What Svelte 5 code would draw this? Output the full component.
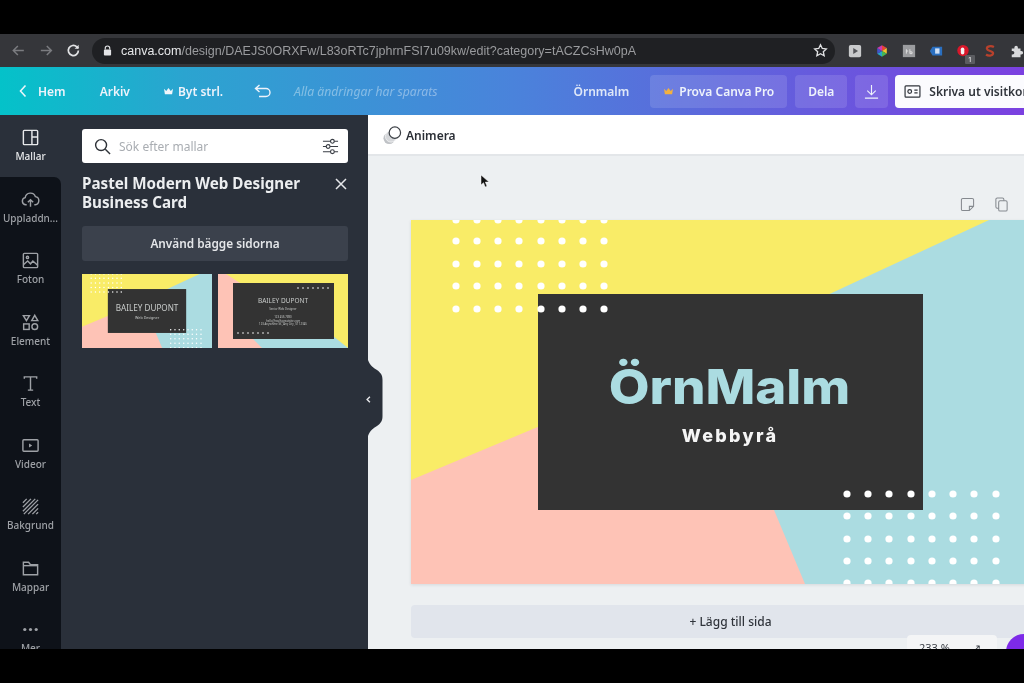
<script>
  const tabs = [
    { id: "mallar", label: "Mallar" },
    { id: "upload", label: "Uppladdn..." },
    { id: "foton", label: "Foton" },
    { id: "element", label: "Element" },
    { id: "text", label: "Text" },
    { id: "videor", label: "Videor" },
    { id: "bakgrund", label: "Bakgrund" },
    { id: "mappar", label: "Mappar" },
    { id: "mer", label: "Mer" }
  ];

  const dotXa = [45, 66, 87, 108, 130, 151, 172, 193];
  const dotYa = [0, 21, 44, 66, 89];
  const dotXb = [436, 457, 478, 500, 521, 542, 563, 585];
  const dotYb = [274, 296, 319, 341, 363];

  const extensions = ["play", "wheel", "fb", "blue", "red", "s", "puzzle"];
</script>

{#snippet art()}
  <rect width="639" height="364" fill="#f9ec67" />
  <polygon points="0,260 430,80 400,364 0,364" fill="#fec3b6" />
  <polygon points="578,0 639,0 639,364 394,364 363,290 300,129" fill="#abdce1" />
  <rect x="127" y="74" width="385" height="216" fill="#333333" />
  {#each dotYa as y}
    {#each dotXa as x}<circle cx={x} cy={y} r="3.6" fill="#fff" />{/each}
  {/each}
  {#each dotYb as y}
    {#each dotXb as x}<circle cx={x} cy={y} r="3.6" fill="#fff" />{/each}
  {/each}
{/snippet}

{#snippet tabIcon(id)}
  <svg class="tab-icon" viewBox="0 0 20 20" fill="none" stroke="currentColor" stroke-width="1.5">
    {#if id === "mallar"}
      <rect x="2.5" y="2.5" width="15" height="15" rx="1" /><path d="M11.5 2.5v15M11.5 9.5h6" />
    {:else if id === "upload"}
      <path d="M6 15.5H5a3.8 3.8 0 0 1-.6-7.5A5.6 5.6 0 0 1 15.2 7a4.3 4.3 0 0 1-.2 8.5h-1" /><path d="M10 17.5v-7M7.2 13 10 10.2l2.8 2.8" />
    {:else if id === "foton"}
      <rect x="2.5" y="2.5" width="15" height="15" rx="1" /><circle cx="6.8" cy="6.8" r="1.2" /><path d="M2.5 14.5 7 10.5l3 3 2.5-3 5 4.5" />
    {:else if id === "element"}
      <path d="M2.5 2.8h6.4L5.7 8zM14.5 2.4l3.2 5.6h-6.4z" /><rect x="2.8" y="11.5" width="5.8" height="5.8" /><circle cx="14.5" cy="14.4" r="3" />
    {:else if id === "text"}
      <path d="M3.5 5V3h13v2M10 3v14M7.2 17h5.6" />
    {:else if id === "videor"}
      <rect x="2" y="4" width="16" height="12" rx="1" /><path d="M8.5 8v4l3.3-2z" fill="currentColor" stroke="none" />
    {:else if id === "bakgrund"}
      <path d="M2 6 6 2M2 10.5 10.5 2M2 15 15 2M3 18 18 3M7.5 18 18 7.5M12 18l6-6M16 18l2-2" stroke-width="1.4" />
    {:else if id === "mappar"}
      <path d="M2.5 16.5v-13h5.5l2 2.5H17.5v10.5z" /><path d="M2.5 7h15" />
    {:else}
      <circle cx="4" cy="10" r="1.7" fill="currentColor" stroke="none" /><circle cx="10" cy="10" r="1.7" fill="currentColor" stroke="none" /><circle cx="16" cy="10" r="1.7" fill="currentColor" stroke="none" />
    {/if}
  </svg>
{/snippet}

{#snippet extIcon(id)}
  <svg class="ext" viewBox="0 0 16 16">
    {#if id === "play"}
      <rect x="1" y="1" width="14" height="14" rx="2" fill="#c9cacc" /><path d="M6 4.5v7l5.500-3.500z" fill="#55565a" />
    {:else if id === "wheel"}
      <path d="M8 1.500 13.500 4.500 8 8z" fill="#e8443a" /><path d="M13.500 4.500v6.500L8 8z" fill="#f0c330" /><path d="M13.500 11 8 14.500V8z" fill="#45b754" /><path d="M8 14.500 2.500 11 8 8z" fill="#27a5c9" /><path d="M2.500 11V4.500L8 8z" fill="#4353c8" /><path d="M2.500 4.500 8 1.500V8z" fill="#c93bb0" />
    {:else if id === "fb"}
      <rect x="1" y="1" width="14" height="14" fill="#9b9c9f" /><path d="M5 11V6M5 8h2M9 6v5M9 9h2.500v2H9" stroke="#e6e6e6" fill="none" />
    {:else if id === "blue"}
      <path d="M1 8l3-5h11v10H4z" fill="#2a6fc0" /><rect x="7" y="5" width="5" height="6" fill="#cfe0f4" />
    {:else if id === "red"}
      <circle cx="8" cy="7.500" r="6.500" fill="#d9172a" /><rect x="5.500" y="4" width="4" height="8" rx="2" fill="#f3f3f3" />
    {:else if id === "s"}
      <path d="M12.500 3.500C9 1.500 4 2.500 4.500 5.500 5 8.500 12 7.500 11.500 10.800 11 13.800 6 14 3.500 12" stroke="#b8412c" stroke-width="2.600" fill="none" />
    {:else}
      <path d="M2 5h3V4a2 2 0 0 1 4 0v1h3v3h1a2 2 0 0 1 0 4h-1v3H2v-3h1a2 2 0 0 0 0-4H2z" fill="#d8d9db" />
    {/if}
  </svg>
{/snippet}

<div class="screen">
  <div class="browser">
    <svg class="nav dim" viewBox="0 0 16 16"><path d="M14 8H2.500M7.500 3 2.500 8l5 5" /></svg>
    <svg class="nav dim" viewBox="0 0 16 16"><path d="M2 8h11.500M8.500 3l5 5-5 5" /></svg>
    <svg class="nav reload" viewBox="0 0 16 16"><path d="M13.500 8A5.500 5.500 0 1 1 11.800 4L13.500 5.500" /><path d="M13.800 1.800v4.400H9.400z" fill="currentColor" stroke="none" /></svg>
    <div class="url">
      <svg class="lock" viewBox="0 0 10 12"><path d="M2.500 5V3.500a2.500 2.500 0 0 1 5 0V5" fill="none" stroke="currentColor" stroke-width="1.300" /><rect x="1" y="5" width="8" height="6.500" rx="1" fill="currentColor" /></svg>
      <span class="host">canva.com</span><span class="path">/design/DAEJS0ORXFw/L83oRTc7jphrnFSI7u09kw/edit?category=tACZCsHw0pA</span>
      <svg class="star" viewBox="0 0 16 16"><path d="m8 1.800 1.900 4 4.300.5-3.200 3 .9 4.300L8 11.500l-3.900 2.100.9-4.300-3.200-3 4.300-.5z" /></svg>
    </div>
    <div class="exts">
      {#each extensions as ext}
        <span class="ext-wrap">
          {@render extIcon(ext)}
          {#if ext === "red"}<span class="ext-badge">1</span>{/if}
        </span>
      {/each}
    </div>
  </div>

  <header class="topbar">
    <svg class="back" viewBox="0 0 8 14"><path d="M6.500 1.500 1.500 7l5 5.500" /></svg>
    <span class="top-link hem">Hem</span>
    <span class="top-link arkiv">Arkiv</span>
    <svg class="crown" viewBox="0 0 12 10"><path d="M1 2l2.500 2.500L6 1l2.500 3.500L11 2l-1 6H2z" fill="currentColor" /></svg>
    <span class="top-link">Byt strl.</span>
    <svg class="undo" viewBox="0 0 18 14"><path d="M5.500 1 1.500 4.500l4 3.500M1.500 4.500H12a4 4 0 0 1 0 8H5" /></svg>
    <span class="saved">Alla ändringar har sparats</span>
    <span class="top-link doc">Örnmalm</span>
    <button class="ghost pro">
      <svg class="crown gold" viewBox="0 0 12 10"><path d="M1 2l2.500 2.500L6 1l2.500 3.500L11 2l-1 6H2z" fill="currentColor" /></svg>
      Prova Canva Pro
    </button>
    <button class="ghost dela">Dela</button>
    <button class="ghost dl" aria-label="Ladda ner">
      <svg viewBox="0 0 16 16"><path d="M8 1v10M3.500 7 8 11.500 12.500 7M1 15h14" /></svg>
    </button>
    <button class="print">
      <svg viewBox="0 0 18 14"><rect x="1" y="1" width="16" height="12" rx="1" /><circle cx="6" cy="7" r="2" /><path d="M11 5.500h3.500M11 8.500h3.500" /></svg>
      Skriva ut visitkort
    </button>
  </header>

  <div class="workspace">
    <nav class="sidebar">
      {#each tabs as tab, i}
        <div class="tab" class:active={i === 0} class:first={i === 1}>
          {@render tabIcon(tab.id)}
          <span>{tab.label}</span>
        </div>
      {/each}
      <div class="tab-rest"></div>
    </nav>

    <aside class="panel">
      <div class="search">
        <svg class="search-icon" viewBox="0 0 18 18"><circle cx="7.500" cy="7.500" r="5.800" /><path d="m12 12 5 5" /></svg>
        <span class="search-text">Sök efter mallar</span>
        <svg class="filter" viewBox="0 0 18 18"><path d="M1 3.500h16M1 9h16M1 14.500h16" /><circle cx="11" cy="3.500" r="2" /><circle cx="6.500" cy="9" r="2" /><circle cx="11" cy="14.500" r="2" /></svg>
      </div>
      <div class="title-row">
        <h1>Pastel Modern Web Designer Business Card</h1>
        <svg class="close" viewBox="0 0 12 12"><path d="M1 1l10 10M11 1 1 11" /></svg>
      </div>
      <button class="use-both">Använd bägge sidorna</button>
      <div class="thumbs">
        <svg class="thumb" viewBox="0 0 639 364" preserveAspectRatio="none">
          {@render art()}
          <text x="320" y="180" text-anchor="middle" class="t-name">BAILEY DUPONT</text>
          <text x="320" y="220" text-anchor="middle" class="t-sub">Web Designer</text>
        </svg>
        <svg class="thumb" viewBox="0 0 130 74" preserveAspectRatio="none">
          <rect width="130" height="74" fill="#f9ec67" />
          <polygon points="0,0 8,0 30,14 44,74 0,74" fill="#fec3b6" />
          <polygon points="34,64 115,62 130,74 44,74" fill="#abdce1" />
          <rect x="15" y="9" width="101" height="56" fill="#333" />
          {#each [80, 85, 90, 95, 100, 105, 110] as x}<circle cx={x} cy="14" r="0.800" fill="#fff" />{/each}
          {#each [20, 25, 30, 35, 40, 45, 50] as x}<circle cx={x} cy="59" r="0.800" fill="#fff" />{/each}
          <text x="65" y="29" text-anchor="middle" class="t2-name">BAILEY DUPONT</text>
          <text x="65" y="36" text-anchor="middle" class="t2-sub">Senior Web Designer</text>
          <text x="65" y="44" text-anchor="middle" class="t2-sub">123 456 7890</text>
          <text x="65" y="47.500" text-anchor="middle" class="t2-sub">hello@reallygreatsite.com</text>
          <text x="65" y="51" text-anchor="middle" class="t2-sub">123 Anywhere St., Any City, ST 12345</text>
        </svg>
      </div>
    </aside>

    <main class="editor">
      <div class="toolbar">
        <svg class="animate" viewBox="0 0 20 20">
          <circle cx="6.500" cy="13" r="6" fill="#bfc2c6" />
          <circle cx="8.500" cy="11" r="6" fill="#d5d7da" stroke="#fff" stroke-width="0.600" />
          <circle cx="12.500" cy="7" r="6" fill="#fff" stroke="#3b3f45" stroke-width="1.300" />
        </svg>
        <span>Animera</span>
      </div>
      <div class="stage">
        <div class="page-actions">
          <svg viewBox="0 0 16 16"><path d="M10 14.500H3a1.500 1.500 0 0 1-1.500-1.500V3A1.500 1.500 0 0 1 3 1.500h10A1.500 1.500 0 0 1 14.500 3v7zM14.500 10H10v4.500" /></svg>
          <svg viewBox="0 0 16 16"><rect x="5" y="4" width="9" height="11" rx="1.500" /><path d="M5 12H3.500A1.500 1.500 0 0 1 2 10.500V2.500A1.500 1.500 0 0 1 3.500 1H9a1.500 1.500 0 0 1 1.500 1.500V4" /></svg>
        </div>
        <svg class="card" viewBox="0 0 639 364">
          {@render art()}
          <text transform="translate(318.500 184) scale(1.1 1)" text-anchor="middle" class="brand">ÖrnMalm</text>
          <text x="319" y="222" text-anchor="middle" class="tagline">Webbyrå</text>
        </svg>
        <div class="add-page">+ Lägg till sida</div>
      </div>
      <svg class="collapse" viewBox="0 0 15 76"><path d="M0 0C2 6 6 8 9 10 13 13 14.500 15 14.500 20V56C14.500 61 13 63 9 66 6 68 2 70 0 76Z" /></svg>
      <svg class="chevron" viewBox="0 0 6 10"><path d="M5 1 1 5l4 4" /></svg>
      <div class="zoom-pill"><span>233 %</span><span class="expand">↗</span></div>
      <div class="help"></div>
      <svg class="cursor" viewBox="0 0 10 14"><path d="M1 1v10l2.500-2.300L5.200 13l1.800-.8-1.700-4.100H9z" fill="#111" stroke="#fff" stroke-width="0.500" /></svg>
    </main>
  </div>
</div>

<style>
  :global(body) {
    background: #000;
  }

  .screen {
    width: 1024px;
    height: 683px;
    padding: 34px 0;
    box-sizing: border-box;
    background: #000;
    display: flex;
    flex-direction: column;
    overflow: hidden;
    font-family: "Noto Sans", "Open Sans", sans-serif;
    filter: blur(0.45px);
  }

  /* browser chrome */
  .browser {
    height: 33px;
    flex: none;
    background: #35363a;
    display: flex;
    align-items: center;
    padding-left: 11px;
    color: #d5d6d8;
  }

  .nav {
    width: 15px;
    height: 15px;
    margin-right: 13px;
    fill: none;
    stroke: currentColor;
    stroke-width: 1.6;
  }

  .nav.dim {
    color: #7b7c80;
  }

  .nav.reload {
    stroke-width: 1.9;
    color: #e2e3e5;
    margin-right: 11px;
  }

  .url {
    width: 743px;
    height: 26px;
    flex: none;
    border-radius: 13px;
    background: #1f2023;
    display: flex;
    align-items: center;
    padding: 0 7px 0 11px;
    box-sizing: border-box;
    font-family: "Liberation Sans", Arial, sans-serif;
    font-size: 12.5px;
    color: #9a9b9e;
  }

  .lock {
    width: 9px;
    height: 11px;
    margin-right: 9px;
    color: #e3e4e6;
  }

  .host {
    color: #e6e7e9;
  }

  .star {
    width: 15px;
    height: 15px;
    margin-left: auto;
    fill: none;
    stroke: #dfe0e2;
    stroke-width: 1.4;
  }

  .exts {
    display: flex;
    margin-left: 13px;
    gap: 13px;
  }

  .ext-wrap {
    position: relative;
    width: 14px;
    height: 14px;
  }

  .ext {
    display: block;
    width: 14px;
    height: 14px;
  }

  .ext-badge {
    position: absolute;
    right: -5px;
    bottom: -6px;
    width: 10px;
    height: 9px;
    background: #5b5c60;
    border-radius: 1px;
    color: #fff;
    font-size: 7px;
    line-height: 9px;
    text-align: center;
  }

  /* canva header */
  .topbar {
    height: 48px;
    flex: none;
    display: flex;
    align-items: center;
    background: linear-gradient(90deg, #04c2c9 0%, #2ba4d0 18%, #4a83db 50%, #5f64dc 72%, #7b40e0 100%);
    color: #eef3fb;
    font-size: 12px;
    font-weight: 600;
    white-space: nowrap;
    overflow: hidden;
  }

  .topbar > * {
    flex: none;
  }

  .back {
    width: 8px;
    height: 14px;
    margin: 0 11px 0 19px;
    fill: none;
    stroke: #eaf6fa;
    stroke-width: 1.6;
  }

  .top-link {
    display: block;
  }

  .arkiv {
    margin-left: 34px;
  }

  .crown {
    width: 11px;
    height: 9px;
    margin: 0 4px 0 33px;
    color: #f2f6fb;
  }

  .undo {
    width: 18px;
    height: 14px;
    margin-left: 31px;
    fill: none;
    stroke: #eef3fb;
    stroke-width: 1.4;
  }

  .saved {
    margin-left: 22px;
    font-size: 12.2px;
    font-weight: 400;
    font-style: italic;
    color: rgba(255, 255, 255, 0.38);
  }

  .doc {
    margin-left: 136px;
    color: #dfe8f8;
  }

  button {
    font: inherit;
    border: 0;
    padding: 0;
    color: inherit;
  }

  .ghost {
    height: 33px;
    border-radius: 4px;
    background: rgba(255, 255, 255, 0.12);
    display: flex;
    align-items: center;
    justify-content: center;
  }

  .pro {
    width: 137px;
    margin-left: 21px;
  }

  .crown.gold {
    margin: 0 5px 0 0;
    color: #f3b13f;
  }

  .dela {
    width: 52px;
    margin-left: 8px;
  }

  .dl {
    width: 33px;
    margin-left: 8px;
  }

  .dl svg {
    width: 15px;
    height: 15px;
    fill: none;
    stroke: #eef3fb;
    stroke-width: 1.2;
  }

  .print {
    width: 150px;
    height: 33px;
    margin-left: 7px;
    border-radius: 4px;
    background: #fbfbfe;
    color: #30343b;
    display: flex;
    align-items: center;
    padding-left: 9px;
  }

  .print svg {
    width: 17px;
    height: 13px;
    margin-right: 8px;
    fill: none;
    stroke: #30343b;
    stroke-width: 1.3;
  }

  /* workspace */
  .workspace {
    flex: 1;
    min-height: 0;
    display: flex;
    overflow: hidden;
  }

  .sidebar {
    width: 61px;
    flex: none;
    display: flex;
    flex-direction: column;
    background: #2a303a;
    overflow: hidden;
  }

  .tab {
    height: 61.500px;
    flex: none;
    background: #0e1219;
    color: #9ea1a6;
    display: flex;
    flex-direction: column;
    align-items: center;
    justify-content: flex-start;
    padding-top: 13px;
    box-sizing: border-box;
    font-size: 10px;
    font-weight: 500;
    line-height: 14px;
    white-space: nowrap;
  }

  .tab-icon {
    width: 19px;
    height: 19px;
    margin-bottom: 2px;
  }

  .tab.active {
    background: #2a303a;
    color: #e8e9eb;
  }

  .tab.first {
    border-top-right-radius: 7px;
  }

  .tab-rest {
    flex: 1;
    background: #0e1219;
  }

  .panel {
    width: 307px;
    flex: none;
    background: #2a303a;
    padding: 14px 20px 0 21px;
    box-sizing: border-box;
  }

  .search {
    height: 34px;
    background: #fff;
    border-radius: 3px;
    display: flex;
    align-items: center;
    padding: 0 9px 0 12px;
    font-size: 12px;
    color: #a9adb2;
  }

  .search-icon {
    width: 17px;
    height: 17px;
    margin-right: 8px;
    fill: none;
    stroke: #2e3238;
    stroke-width: 1.5;
  }

  .filter {
    width: 17px;
    height: 17px;
    margin-left: auto;
    fill: #fff;
    stroke: #3a3e45;
    stroke-width: 1.2;
  }

  .title-row {
    display: flex;
    justify-content: space-between;
    margin-top: 11px;
  }

  h1 {
    margin: 0;
    width: 235px;
    font-size: 15.200px;
    line-height: 19px;
    font-weight: 700;
    color: #eceef0;
  }

  .close {
    width: 12px;
    height: 12px;
    margin: 4px 1px 0 0;
    fill: none;
    stroke: #e6e7ea;
    stroke-width: 1.5;
  }

  .use-both {
    display: block;
    width: 100%;
    height: 35px;
    margin-top: 14px;
    padding-bottom: 2px;
    border-radius: 3px;
    background: #3b414c;
    color: #e4e6e9;
    font-size: 11.800px;
    font-weight: 600;
  }

  .thumbs {
    display: flex;
    gap: 6px;
    margin-top: 13px;
  }

  .thumb {
    width: 130px;
    height: 74px;
    display: block;
  }

  .t-name {
    font-family: "Noto Sans", sans-serif;
    font-size: 40px;
    fill: #c9cccb;
  }

  .t-sub {
    font-family: "Noto Sans", sans-serif;
    font-size: 18px;
    fill: #c9cccb;
  }

  .t2-name {
    font-family: "Noto Sans", sans-serif;
    font-size: 6.500px;
    fill: #c9cccb;
  }

  .t2-sub {
    font-family: "Noto Sans", sans-serif;
    font-size: 2.800px;
    fill: #c4c6c5;
  }

  .editor {
    position: relative;
    flex: 1;
    min-width: 0;
    display: flex;
    flex-direction: column;
    background: #edf0f2;
  }

  .toolbar {
    height: 41px;
    flex: none;
    box-sizing: border-box;
    background: #fff;
    border-bottom: 2px solid #e3e6e9;
    display: flex;
    align-items: center;
    padding: 2px 0 0 15px;
    font-size: 12px;
    font-weight: 600;
    color: #2b2f36;
  }

  .animate {
    width: 19px;
    height: 19px;
    margin-right: 4px;
  }

  .stage {
    flex: 1;
    min-height: 0;
    padding-left: 43px;
    overflow: hidden;
  }

  .page-actions {
    height: 64px;
    width: 601px;
    box-sizing: border-box;
    display: flex;
    justify-content: flex-end;
    align-items: flex-end;
    gap: 19px;
    padding: 0 3px 8px 0;
  }

  .page-actions svg {
    width: 15px;
    height: 15px;
    fill: none;
    stroke: #85898f;
    stroke-width: 1.100;
  }

  .card {
    display: block;
    width: 639px;
    height: 364px;
    box-shadow: 0 1px 3px rgba(40, 50, 60, 0.12);
  }

  .brand {
    font-family: "Inter", sans-serif;
    font-size: 48px;
    font-weight: 800;
    fill: #abdce1;
  }

  .tagline {
    font-family: "Inter", sans-serif;
    font-size: 18px;
    font-weight: 800;
    letter-spacing: 2.300px;
    fill: #f5f5f5;
  }

  .add-page {
    width: 639px;
    height: 33px;
    margin-top: 21px;
    border-radius: 4px;
    background: #e1e5ec;
    color: #30343b;
    font-size: 12px;
    font-weight: 500;
    line-height: 33px;
    text-align: center;
  }

  .collapse {
    position: absolute;
    left: 0;
    top: 245px;
    width: 15px;
    height: 76px;
    fill: #2a303a;
  }

  .chevron {
    position: absolute;
    left: -2px;
    top: 281px;
    width: 5px;
    height: 7px;
    fill: none;
    stroke: #e6e7ea;
    stroke-width: 2;
  }

  .zoom-pill {
    position: absolute;
    left: 539px;
    top: 520px;
    width: 90px;
    height: 30px;
    background: #f4f5f6;
    border-radius: 4px;
    font-size: 11px;
    line-height: 26px;
    padding-left: 12px;
    box-sizing: border-box;
    color: #3a3e45;
  }

  .expand {
    margin-left: 22px;
  }

  .help {
    position: absolute;
    left: 638px;
    top: 519px;
    width: 36px;
    height: 36px;
    border-radius: 50%;
    background: #7d2ae8;
  }

  .cursor {
    position: absolute;
    left: 112px;
    top: 59px;
    width: 10px;
    height: 14px;
  }
</style>
